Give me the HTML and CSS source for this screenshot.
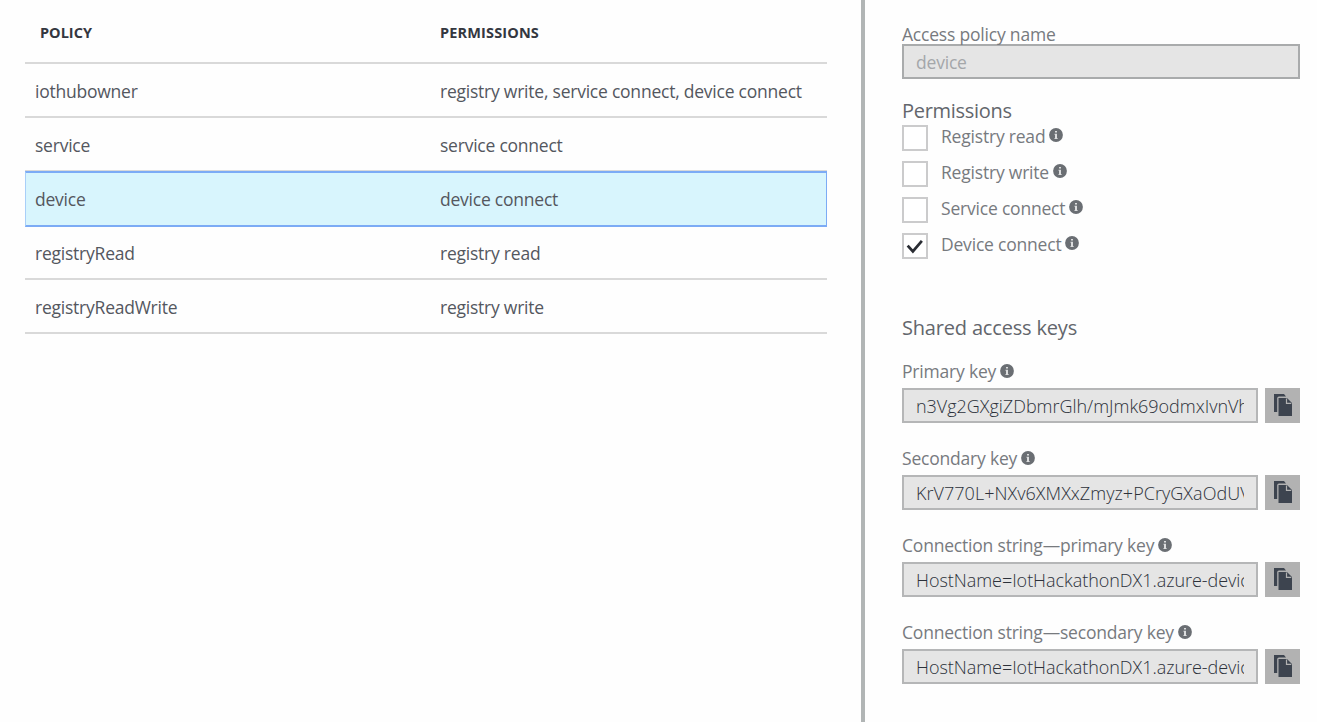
FILE: index.html
```
<!DOCTYPE html>
<html lang="en">
<head>
<meta charset="utf-8">
<title>Shared access policies</title>
<link rel="stylesheet" href="styles.css">
</head>
<body>
<svg class="defs" aria-hidden="true">
  <symbol id="info" viewBox="0 0 14 14"><circle cx="7" cy="7" r="6.9" fill="#6a6e73"/><path d="M6 2.900h2v1.700H6zM5.500 5.800H8v4.200h.6V11H5.500v-1H6V6.800h-.5z" fill="#dcddde"/></symbol>
  <symbol id="copy" viewBox="0 0 35 35"><path d="M9 6h10l2 2.500h-7q-1.800 0-1.800 1.800V24H9z" fill="#3d444f"/><path d="M13.500 10h8.500l5 5V28H13.500z" fill="#3d444f"/><path d="M21.500 10.500v4.800h4.800" fill="none" stroke="#b2b2b2" stroke-width="1.200"/></symbol>
</svg>
<div class="page">
  <main class="policies">
    <div class="row head"><span class="c1"><span>POLICY</span></span><span>PERMISSIONS</span></div>
    <div class="row"><span class="c1">iothubowner</span><span>registry write, service connect, device connect</span></div>
    <div class="row"><span class="c1">service</span><span>service connect</span></div>
    <div class="row selected"><span class="c1">device</span><span>device connect</span></div>
    <div class="row"><span class="c1">registryRead</span><span>registry read</span></div>
    <div class="row"><span class="c1">registryReadWrite</span><span>registry write</span></div>
  </main>
  <aside class="details">
    <div class="label name-label">Access policy name</div>
    <div class="field disabled"><span class="value">device</span></div>
    <h2 class="title perm-title">Permissions</h2>
    <div class="check"><span class="box"></span><span class="label">Registry read</span><svg class="info"><use href="#info"/></svg></div>
    <div class="check"><span class="box"></span><span class="label">Registry write</span><svg class="info"><use href="#info"/></svg></div>
    <div class="check"><span class="box"></span><span class="label">Service connect</span><svg class="info"><use href="#info"/></svg></div>
    <div class="check"><span class="box"><svg class="tick" viewBox="0 0 24 24"><path d="M4 11.500l5.700 6.500L19.500 6.500" fill="none" stroke="#292c33" stroke-width="3"/></svg></span><span class="label">Device connect</span><svg class="info"><use href="#info"/></svg></div>
    <h2 class="title keys-title">Shared access keys</h2>
    <div class="key"><div class="key-label"><span class="label">Primary key</span><svg class="info"><use href="#info"/></svg></div>
      <div class="key-line"><div class="field"><span class="value k1">n3Vg2GXgiZDbmrGlh/mJmk69odmxIvnVh</span></div><button class="copy"><svg><use href="#copy"/></svg></button></div></div>
    <div class="key"><div class="key-label"><span class="label">Secondary key</span><svg class="info"><use href="#info"/></svg></div>
      <div class="key-line"><div class="field"><span class="value k2">KrV770L+NXv6XMXxZmyz+PCryGXaOdUV</span></div><button class="copy"><svg><use href="#copy"/></svg></button></div></div>
    <div class="key"><div class="key-label"><span class="label">Connection string—primary key</span><svg class="info"><use href="#info"/></svg></div>
      <div class="key-line"><div class="field"><span class="value k3">HostName=IotHackathonDX1.azure-devices</span></div><button class="copy"><svg><use href="#copy"/></svg></button></div></div>
    <div class="key"><div class="key-label"><span class="label">Connection string—secondary key</span><svg class="info"><use href="#info"/></svg></div>
      <div class="key-line"><div class="field"><span class="value k3">HostName=IotHackathonDX1.azure-devices</span></div><button class="copy"><svg><use href="#copy"/></svg></button></div></div>
  </aside>
</div>
</body>
</html>
```
FILE: styles.css
```
* { box-sizing: border-box; }
body { margin: 0; background: #fefefe; font-family: "Segoe UI", "Open Sans", "Noto Sans", sans-serif; font-size: 17.500px; color: #54575e; overflow: hidden; }
.defs { display: none; }
.page { display: flex; height: 722px; }
.policies { width: 861px; padding-left: 25px; flex: none; }
.row { width: 802px; height: 54px; display: grid; grid-template-columns: 405px 1fr; align-items: center; padding: 2px 0 0 10px; border-bottom: 2px solid #d9d9d9; letter-spacing: -.23px; white-space: nowrap; }
.head { height: 64px; font-size: 14.500px; font-weight: 700; color: #343740; letter-spacing: .15px; }
.head .c1 { padding-left: 5px; letter-spacing: 0; }
.selected { height: 56px; margin-top: -1px; background: #d8f5fd; border: 1px solid #7cabf5; border-top-width: 2px; border-bottom-width: 2px; border-left-color: #a9cff8; padding: 0 0 0 9px; }
.selected + .row { height: 53px; padding-top: 0; }
.details { flex: 1; min-width: 0; border-left: 4px solid #b1b5b5; padding: 22px 17px 0 37px; }
.label { font-size: 17.500px; line-height: 24px; letter-spacing: -.2px; color: #777a7e; white-space: nowrap; }
.name-label { height: 22px; }
.field { height: 35px; border: 2px solid #b5b6b7; background: #e5e5e5; padding: 0 12px; display: flex; align-items: center; flex: 1; min-width: 0; }
.value { display: block; overflow: hidden; white-space: nowrap; width: 100%; font-size: 18px; font-weight: 330; color: #2c313a; line-height: 28px; }
.k1 { letter-spacing: -.02px; }
.k2 { letter-spacing: .04px; }
.k3 { letter-spacing: -.04px; }
.disabled .value { font-size: 17.500px; color: #a4a7aa; font-weight: 400; letter-spacing: -.2px; }
.disabled { border-color: #a9abac; }
.title { margin: 0; font-size: 20px; font-weight: 400; color: #63666c; line-height: 28px; letter-spacing: -.28px; white-space: nowrap; }
.perm-title { margin-top: 18px; height: 28px; }
.keys-title { margin-top: 45px; height: 45px; letter-spacing: -.18px; }
.check { height: 36px; display: flex; }
.box { width: 26px; height: 26px; border: 2px solid #cbcbcc; background: #fff; margin-right: 13px; }
.check .label { height: 24px; margin-top: -1px; }
.info { width: 14px; height: 14px; flex: none; margin: 3px 0 0 4px; }
.tick { display: block; width: 22px; height: 22px; }
.key { height: 87px; }
.key-label { display: flex; height: 29px; }
.key-label .info { margin: 5px 0 0 4px; }
.key-line { display: flex; gap: 7px; }
.copy { width: 35px; height: 35px; border: 0; padding: 0; background: #b2b2b2; }
.copy svg { display: block; width: 35px; height: 35px; }
```
